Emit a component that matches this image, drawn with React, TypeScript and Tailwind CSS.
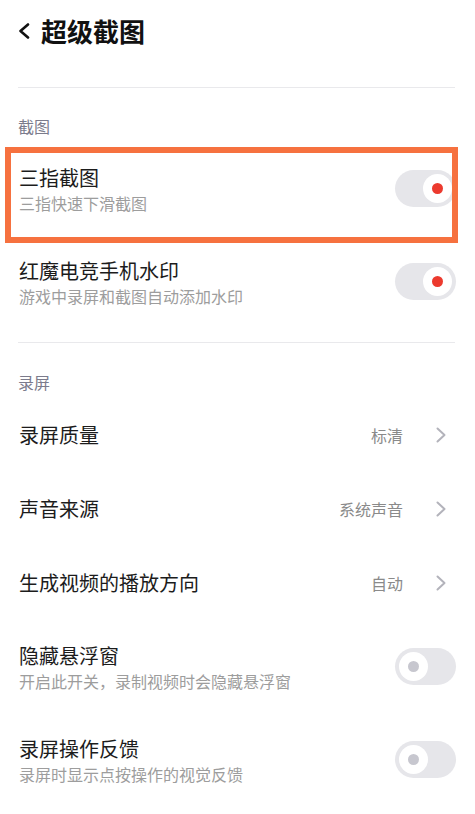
import React from "react";

interface ToggleProps {
  on: boolean;
}

const Toggle: React.FC<ToggleProps> = ({ on }) => {
  return (
    <div className="w-[61px] h-[37px] shrink-0 rounded-full bg-[#e6e6ea] flex items-center px-[4px]">
      <div
        className={
          on
            ? "ml-auto w-[29px] h-[29px] rounded-full bg-white flex items-center justify-center"
            : "w-[29px] h-[29px] rounded-full bg-white flex items-center justify-center"
        }
      >
        <div className={on ? "w-[11px] h-[11px] rounded-full bg-[#ec3a2e]" : "w-[11px] h-[11px] rounded-full bg-[#c7c7cf]"} />
      </div>
    </div>
  );
};

const Chevron = () => (
  <svg width="12" height="16" viewBox="0 0 12 16" className="shrink-0">
    <polyline points="2.5,1.5 9.5,8 2.5,14.5" fill="none" stroke="#b3b3bb" strokeWidth="2" strokeLinecap="round" strokeLinejoin="round" />
  </svg>
);

interface SwitchRowProps {
  title: string;
  desc: string;
  on: boolean;
  highlight?: boolean;
}

const SwitchRow: React.FC<SwitchRowProps> = ({ title, desc, on, highlight }) => {
  return (
    <div className="relative h-[93px] flex items-center justify-between pl-[19px] pr-[19px]">
      <div className="flex flex-col">
        <div className="text-[20px] leading-[26px] text-[#1c1c1c]">{title}</div>
        <div className="text-[16px] leading-[20px] mt-[2px] text-[#9d9d9d]">{desc}</div>
      </div>
      <Toggle on={on} />
      {highlight && (
        <div className="absolute left-[5px] top-[5px] w-[453px] h-[96px] border-[6px] border-[#f6713f] pointer-events-none" />
      )}
    </div>
  );
};

interface LinkRowProps {
  title: string;
  value: string;
}

const LinkRow: React.FC<LinkRowProps> = ({ title, value }) => {
  return (
    <div className="h-[74px] flex items-center justify-between pl-[19px] pr-[28px]">
      <div className="text-[20px] leading-[26px] text-[#1c1c1c]">{title}</div>
      <div className="flex items-center">
        <span className="text-[16px] leading-[20px] text-[#8a8a8a]">{value}</span>
        <span className="ml-[32px] flex">
          <Chevron />
        </span>
      </div>
    </div>
  );
};

export default function App() {
  return (
    <div className="w-[475px] min-h-[814px] bg-white font-['Noto_Sans_CJK_SC','Noto_Sans',sans-serif]">
      <div className="h-[62px] flex items-center pl-[18px]">
        <svg width="12" height="16" viewBox="0 0 12 16">
          <polyline points="10,1.5 2.5,8 10,14.5" fill="none" stroke="#111" strokeWidth="2.6" strokeLinecap="round" strokeLinejoin="round" />
        </svg>
        <h1 className="ml-[11px] text-[26px] leading-none font-bold text-[#111]">超级截图</h1>
      </div>

      <div className="mt-[25px] ml-[18px] mr-[20px] h-px bg-[#e9e9ec]" />

      <div className="mt-[28px] px-[18px] text-[16px] leading-[20px] text-[#7b7b8c]">截图</div>
      <div className="mt-[6px]">
        <SwitchRow title="三指截图" desc="三指快速下滑截图" on highlight />
        <SwitchRow title="红魔电竞手机水印" desc="游戏中录屏和截图自动添加水印" on />
      </div>

      <div className="mt-[14px] ml-[18px] mr-[20px] h-px bg-[#e9e9ec]" />

      <div className="mt-[29px] px-[18px] text-[16px] leading-[20px] text-[#7b7b8c]">录屏</div>
      <div className="mt-[6px]">
        <LinkRow title="录屏质量" value="标清" />
        <LinkRow title="声音来源" value="系统声音" />
        <LinkRow title="生成视频的播放方向" value="自动" />
        <SwitchRow title="隐藏悬浮窗" desc="开启此开关，录制视频时会隐藏悬浮窗" on={false} />
        <SwitchRow title="录屏操作反馈" desc="录屏时显示点按操作的视觉反馈" on={false} />
      </div>
    </div>
  );
}
